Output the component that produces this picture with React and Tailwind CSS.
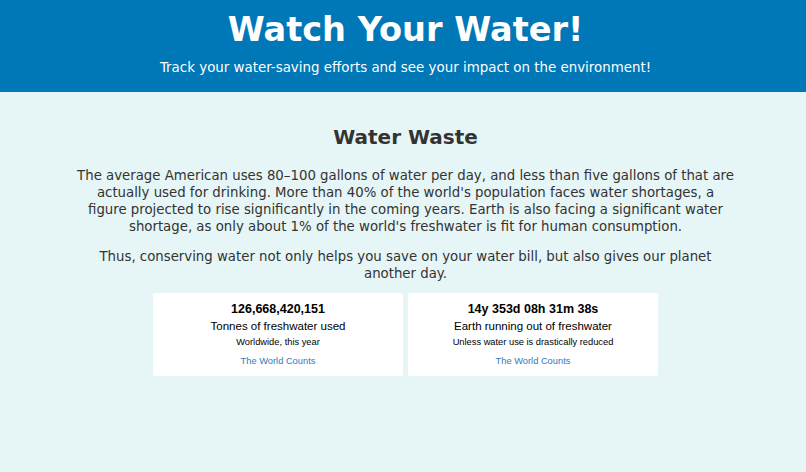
export default function App() {
  const cards = [
    {
      value: "126,668,420,151",
      label: "Tonnes of freshwater used",
      note: "Worldwide, this year",
    },
    {
      value: "14y 353d 08h 31m 38s",
      label: "Earth running out of freshwater",
      note: "Unless water use is drastically reduced",
    },
  ];

  return (
    <div className="min-h-[472px] bg-[#e6f5f6] font-['DejaVu_Sans',sans-serif]">
      <header className="bg-[#0077b6] h-[92px] flex flex-col items-center pl-[5px] pt-[9px] text-white">
        <h1 className="text-[33.6px] leading-[42px] font-bold">Watch Your Water!</h1>
        <p className="text-[13.4px] leading-[18px] mt-[8px]">
          Track your water-saving efforts and see your impact on the environment!
        </p>
      </header>

      <main className="flex flex-col items-center pl-[5px] pt-[33px]">
        <h2 className="text-[20px] leading-[24px] font-bold text-[#333333]">Water Waste</h2>
        <div className="w-[680px] text-center text-[13.3px] leading-[17px] text-[#333333] mt-[18px]">
          <p>
            The average American uses 80–100 gallons of water per day, and less than five gallons of
            that are
            <br />
            actually used for drinking. More than 40% of the world's population faces water
            shortages, a
            <br />
            figure projected to rise significantly in the coming years. Earth is also facing a
            significant water
            <br />
            shortage, as only about 1% of the world's freshwater is fit for human consumption.
          </p>
          <p className="mt-[13px]">
            Thus, conserving water not only helps you save on your water bill, but also gives our
            planet
            <br />
            another day.
          </p>
        </div>

        <div className="flex gap-[5px] mt-[11px] font-['Liberation_Sans',sans-serif]">
          {cards.map((c) => (
            <div
              key={c.value}
              className="w-[250px] h-[83px] bg-white rounded-[2px] flex flex-col items-center pt-[8px]"
            >
              <div className="text-[12.5px] leading-[16px] font-bold text-black">{c.value}</div>
              <div className="text-[11.5px] leading-[14px] text-black mt-[2px]">{c.label}</div>
              <div className="text-[9.3px] leading-[12px] text-black mt-[3px]">{c.note}</div>
              <a href="#" className="text-[9.3px] leading-[12px] text-[#337ab7] mt-[7px]">
                The World Counts
              </a>
            </div>
          ))}
        </div>
      </main>
    </div>
  );
}
